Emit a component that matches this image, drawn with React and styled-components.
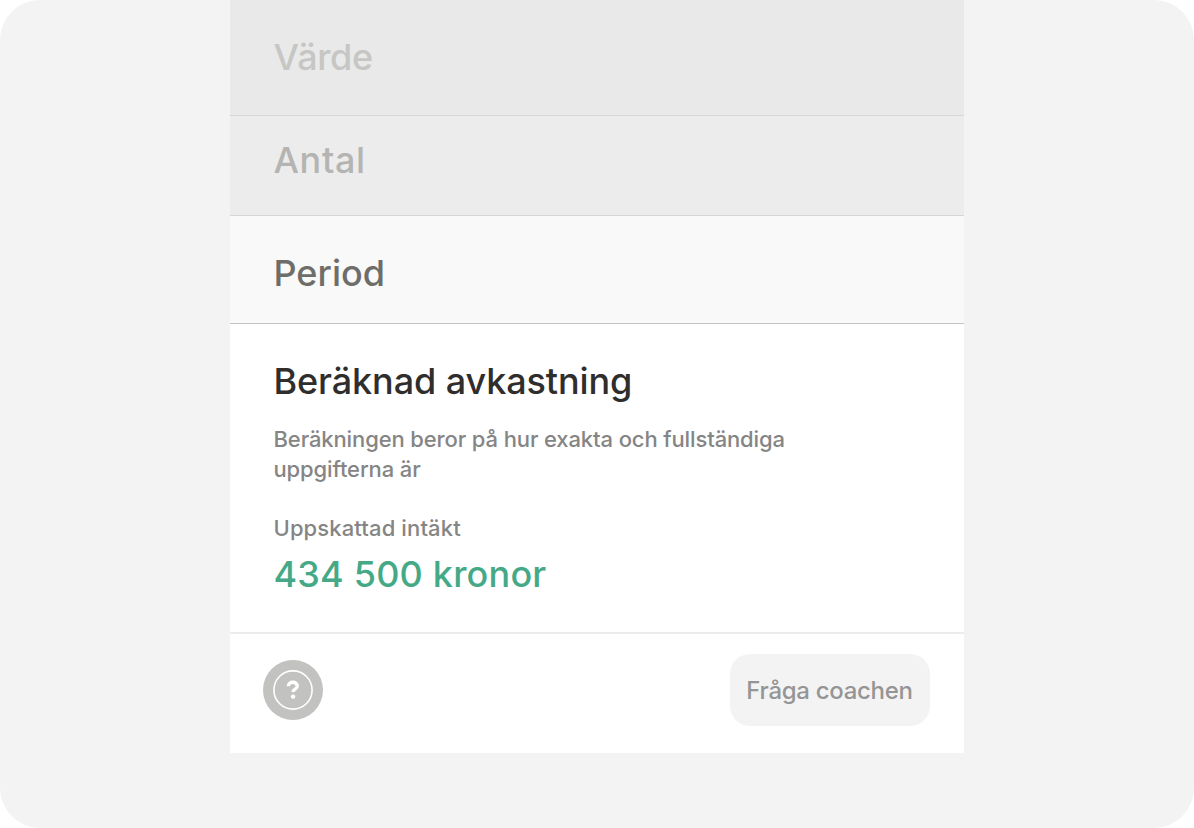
import React from "react";
import styled, { createGlobalStyle } from "styled-components";

const GlobalStyle = createGlobalStyle`
  html, body {
    margin: 0;
    padding: 0;
    background: #fff;
  }
  * {
    box-sizing: border-box;
  }
`;

const Screen = styled.div`
  width: 1194px;
  height: 828px;
  background: #f3f3f3;
  border-radius: 40px;
  display: flex;
  justify-content: center;
  overflow: hidden;
  font-family: "Inter", "Noto Sans", sans-serif;
`;

const Sheet = styled.div`
  width: 734px;
  height: 753px;
  margin-right: 1px;
  background: #fff;
  display: flex;
  flex-direction: column;
`;

const StepRow = styled.div`
  height: ${(p) => p.$height}px;
  padding: ${(p) => p.$top}px 44px 0;
  background: ${(p) => p.$bg};
  border-bottom: 1px solid ${(p) => p.$line};
  color: ${(p) => p.$color};
  font-size: 36px;
  line-height: 40px;
  font-weight: 500;
  letter-spacing: ${(p) => p.$spacing}px;
`;

const Result = styled.div`
  height: 310px;
  padding: 36px 44px 0;
  border-bottom: 2px solid #ececec;
`;

const Title = styled.h2`
  margin: 0;
  font-size: 36px;
  line-height: 42px;
  font-weight: 500;
  letter-spacing: -0.1px;
  color: #2f2e2c;
`;

const Note = styled.p`
  margin: 22px 0 0;
  width: 560px;
  font-size: 22px;
  line-height: 30px;
  font-weight: 500;
  letter-spacing: -0.12px;
  color: #858585;
`;

const Label = styled.div`
  margin-top: 29px;
  font-size: 22px;
  line-height: 30px;
  font-weight: 500;
  letter-spacing: 0.12px;
  color: #858585;
`;

const Amount = styled.div`
  margin-top: 8px;
  font-size: 36px;
  line-height: 46px;
  font-weight: 500;
  letter-spacing: 0.2px;
  color: #45a987;
`;

const Footer = styled.div`
  flex: 1;
  display: flex;
  align-items: center;
  justify-content: space-between;
  padding: 0 34px 7px 33px;
`;

const HelpButton = styled.button`
  width: 60px;
  height: 60px;
  padding: 0;
  border: none;
  border-radius: 50%;
  background: #c2c2c0;
  display: flex;
  align-items: center;
  justify-content: center;
`;

const CoachButton = styled.button`
  width: 200px;
  height: 72px;
  border: none;
  border-radius: 20px;
  background: #f3f3f3;
  color: #959595;
  font-family: inherit;
  font-size: 24px;
  font-weight: 500;
  letter-spacing: -0.3px;
`;

const steps = [
  { text: "Värde", height: 116, top: 37, spacing: -0.4, bg: "#e9e9e9", line: "#d6d6d6", color: "#c6c6c4" },
  { text: "Antal", height: 100, top: 24, spacing: 0.6, bg: "#ececec", line: "#d6d6d6", color: "#b4b4b2" },
  { text: "Period", height: 108, top: 37, spacing: 0, bg: "#f9f9f9", line: "#c4c4c4", color: "#6e6d69" },
];

const App = () => (
  <>
    <GlobalStyle />
    <Screen>
      <Sheet>
        {steps.map((s) => (
          <StepRow
            key={s.text}
            $height={s.height}
            $top={s.top}
            $spacing={s.spacing}
            $bg={s.bg}
            $line={s.line}
            $color={s.color}
          >
            {s.text}
          </StepRow>
        ))}
        <Result>
          <Title>Beräknad avkastning</Title>
          <Note>Beräkningen beror på hur exakta och fullständiga uppgifterna är</Note>
          <Label>Uppskattad intäkt</Label>
          <Amount>434 500 kronor</Amount>
        </Result>
        <Footer>
          <HelpButton aria-label="Hjälp">
            <svg width="40" height="40" viewBox="0 0 40 40" fill="none">
              <circle cx="20" cy="20" r="19.1" stroke="#fff" strokeWidth="1.6" />
              <path
                d="M15.4 16.2c0-2.4 2-3.9 4.5-3.9s4.4 1.4 4.4 3.6c0 3.3-4.2 3.2-4.2 6.1"
                stroke="#fff"
                strokeWidth="3.4"
              />
              <circle cx="20.1" cy="26.6" r="2.2" fill="#fff" />
            </svg>
          </HelpButton>
          <CoachButton>Fråga coachen</CoachButton>
        </Footer>
      </Sheet>
    </Screen>
  </>
);

export default App;
